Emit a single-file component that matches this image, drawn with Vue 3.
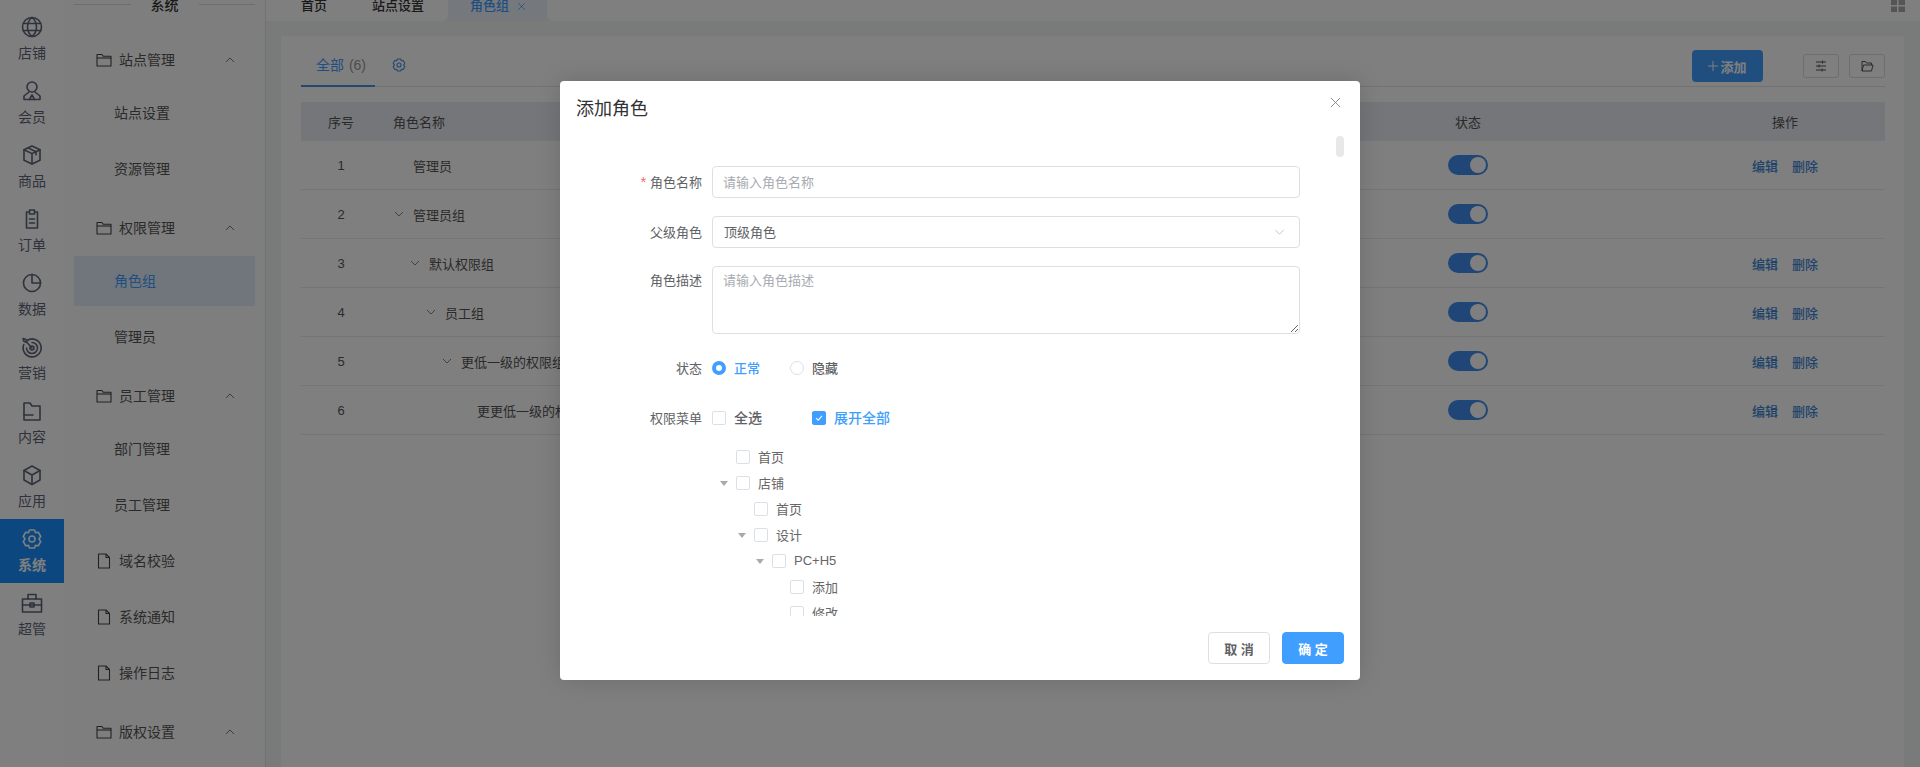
<script setup>
const railItems = [
  { label: '店铺', paths: ['M12 2.500a9.500 9.500 0 1 0 0 19a9.500 9.500 0 1 0 0-19z', 'M12 2.500c-6 5-6 14 0 19M12 2.500c6 5 6 14 0 19', 'M3.600 8.500h16.800M3.600 15.500h16.800'] },
  { label: '会员', paths: ['M12 3a5 5 0 1 0 0 10a5 5 0 1 0 0-10z', 'M9 13l-5 4v3.500h16V17l-5-4', 'M9.500 20.500L12 16l2.500 4.500'] },
  { label: '商品', paths: ['M12 3l8 3.800v10.400l-8 3.800l-8-3.800V6.800z', 'M4 6.800l8 3.800l8-3.800M12 10.600V21', 'M8 4.900l8 3.800v3'] },
  { label: '订单', paths: ['M8.500 5H6.500v16h11V5h-2', 'M9.500 3h5v4h-5z', 'M9.500 12h5M9.500 16h5'] },
  { label: '数据', paths: ['M12 3.500a8.500 8.500 0 1 0 8.500 8.500', 'M12 3.500V12h8.500', 'M12 3.500a8.500 8.500 0 0 1 8.500 8.500'] },
  { label: '营销', paths: ['M7 5.500a9 9 0 1 1-3.200 4', 'M12 7.500a5.500 5.500 0 1 1-5.500 5.500', 'M12 11a2 2 0 1 0 0 4a2 2 0 1 0 0-4z', 'M3 3.500l3 1l1 3l5 5.500M3 3.500l1 3l3 1'] },
  { label: '内容', paths: ['M4 4h6l2 3h8v14H4z', 'M4 16h9'] },
  { label: '应用', paths: ['M12 3l8 4.500v9.500l-8 4.500l-8-4.500V7.500z', 'M4 7.500l8 4.500l8-4.500M12 12v9.500'] },
  { label: '系统', active: true, paths: ['M9.500 3h5l1 2.600l2.800-.4l2.400 4.300l-1.800 2.500l1.800 2.500l-2.400 4.300l-2.800-.4l-1 2.600h-5l-1-2.600l-2.800.4l-2.400-4.300l1.800-2.500l-1.800-2.500l2.400-4.300l2.800.4z', 'M12 9a3 3 0 1 0 0 6a3 3 0 1 0 0-6z'] },
  { label: '超管', paths: ['M2.500 8h19v13h-19z', 'M8 8V3.500h8V8', 'M2.500 14h19', 'M10 12h4v4h-4z'] },
]

const menu = [
  { type: 'group', label: '站点管理' },
  { type: 'sub', label: '站点设置' },
  { type: 'sub', label: '资源管理' },
  { type: 'group', label: '权限管理' },
  { type: 'sub', label: '角色组', active: true },
  { type: 'sub', label: '管理员' },
  { type: 'group', label: '员工管理' },
  { type: 'sub', label: '部门管理' },
  { type: 'sub', label: '员工管理' },
  { type: 'leaf', label: '域名校验' },
  { type: 'leaf', label: '系统通知' },
  { type: 'leaf', label: '操作日志' },
  { type: 'group', label: '版权设置' },
]

const rows = [
  { no: 1, name: '管理员', level: 0, arrow: false, ops: true },
  { no: 2, name: '管理员组', level: 0, arrow: true, ops: false },
  { no: 3, name: '默认权限组', level: 1, arrow: true, ops: true },
  { no: 4, name: '员工组', level: 2, arrow: true, ops: true },
  { no: 5, name: '更低一级的权限组', level: 3, arrow: true, ops: true },
  { no: 6, name: '更更低一级的权限组', level: 4, arrow: false, ops: true },
]

const tree = [
  { label: '首页', level: 0, arrow: false },
  { label: '店铺', level: 0, arrow: true },
  { label: '首页', level: 1, arrow: false },
  { label: '设计', level: 1, arrow: true },
  { label: 'PC+H5', level: 2, arrow: true },
  { label: '添加', level: 3, arrow: false },
  { label: '修改', level: 3, arrow: false },
  { label: '删除', level: 3, arrow: false },
]
</script>

<template>
  <div class="page">
    <aside class="rail">
      <div v-for="item in railItems" :key="item.label" class="rail-item" :class="{ active: item.active }">
        <svg class="rail-icon" viewBox="0 0 24 24" fill="none" stroke="currentColor" stroke-width="1.600" stroke-linejoin="round" stroke-linecap="round">
          <path v-for="d in item.paths" :key="d" :d="d" />
        </svg>
        <span>{{ item.label }}</span>
      </div>
    </aside>

    <nav class="menu">
      <div class="menu-head"><i></i><b>系统</b><i></i></div>
      <template v-for="(m, idx) in menu" :key="idx">
        <div v-if="m.type === 'group'" class="menu-group">
          <svg class="m-icon" viewBox="0 0 16 16" fill="none" stroke="currentColor" stroke-width="1.100" stroke-linejoin="round">
            <path d="M1 2.500h5l1.200 1.800H15V14H1z" /><path d="M1 6h14" />
          </svg>
          <span class="m-text">{{ m.label }}</span>
          <svg class="chev" viewBox="0 0 10 6" fill="none" stroke="currentColor" stroke-width="0.900"><path d="M1 5l4-4l4 4" /></svg>
        </div>
        <div v-else-if="m.type === 'sub'" class="menu-sub" :class="{ active: m.active }">{{ m.label }}</div>
        <div v-else class="menu-leaf">
          <svg class="m-icon" viewBox="0 0 16 16" fill="none" stroke="currentColor" stroke-width="1.100" stroke-linejoin="round">
            <path d="M2.500 1h7.500l3.500 3.500V15h-11z" /><path d="M10 1v3.500h3.500" />
          </svg>
          <span class="m-text">{{ m.label }}</span>
        </div>
      </template>
    </nav>

    <main class="main">
      <header class="tabs">
        <div class="tab">首页</div>
        <div class="tab">站点设置</div>
        <div class="tab current">角色组
          <svg class="tab-x" viewBox="0 0 10 10" fill="none" stroke="currentColor" stroke-width="0.900"><path d="M1.500 1.500l7 7M8.500 1.500l-7 7" /></svg>
        </div>
        <svg class="grid-icon" viewBox="0 0 14 12" fill="currentColor">
          <rect x="0" y="0" width="6" height="5" /><rect x="7.500" y="0" width="6.500" height="5" />
          <rect x="0" y="6.500" width="6" height="5.500" /><rect x="7.500" y="6.500" width="6.500" height="5.500" />
        </svg>
      </header>

      <section class="content">
        <div class="card">
          <div class="card-bar">
            <div class="all-tab">全部 <em>(6)</em></div>
            <svg class="bar-gear" viewBox="0 0 24 24" fill="none" stroke="currentColor" stroke-width="1.700" stroke-linejoin="round">
              <path d="M9.500 3h5l1 2.600l2.800-.4l2.400 4.300l-1.800 2.500l1.800 2.500l-2.400 4.300l-2.800-.4l-1 2.600h-5l-1-2.600l-2.800.4l-2.400-4.300l1.800-2.500l-1.800-2.500l2.400-4.300l2.800.4z" />
              <path d="M12 9a3 3 0 1 0 0 6a3 3 0 1 0 0-6z" />
            </svg>
            <div class="bar-fill"></div>
            <button class="add-btn">
              <svg viewBox="0 0 10 10" fill="none" stroke="currentColor" stroke-width="1"><path d="M5 0v10M0 5h10" /></svg>添加
            </button>
            <button class="ghost-btn">
              <svg viewBox="0 0 14 14" fill="none" stroke="currentColor" stroke-width="1"><path d="M2 3h10M2 7h10M2 11h10M8.500 1.500v3M5 5.500v3M8 9.500v3" /></svg>
            </button>
            <button class="ghost-btn">
              <svg viewBox="0 0 14 14" fill="none" stroke="currentColor" stroke-width="1" stroke-linejoin="round"><path d="M2 12V2.500h3.500l1 1.500h5v2M2 12l1.500-6H13l-1.500 6z" /></svg>
            </button>
          </div>

          <div class="t-row t-head">
            <div class="c-no">序号</div>
            <div class="c-name head-name">角色名称</div>
            <div class="c-center">状态</div>
            <div class="c-center">操作</div>
          </div>
          <div v-for="r in rows" :key="r.no" class="t-row">
            <div class="c-no num">{{ r.no }}</div>
            <div class="c-name" :style="{ paddingLeft: 12 + r.level * 16 + 'px' }">
              <span class="arrow-slot">
                <svg v-if="r.arrow" viewBox="0 0 10 6" fill="none" stroke="currentColor" stroke-width="0.900"><path d="M1 1l4 4l4-4" /></svg>
              </span>
              <span class="nm">{{ r.name }}</span>
            </div>
            <div class="c-center"><span class="toggle"><i></i></span></div>
            <div class="c-center ops">
              <template v-if="r.ops"><a>编辑</a><a>删除</a></template>
            </div>
          </div>
        </div>
      </section>
    </main>

    <div class="overlay"></div>

    <div class="dialog">
      <div class="d-head">
        <span class="d-title">添加角色</span>
        <svg class="d-close" viewBox="0 0 12 12" fill="none" stroke="currentColor" stroke-width="1"><path d="M1 1l10 10M11 1L1 11" /></svg>
      </div>
      <div class="d-body">
        <div class="thumb"></div>
        <div class="f-row">
          <label><span class="req">*</span> 角色名称</label>
          <input class="ctl" type="text" placeholder="请输入角色名称" />
        </div>
        <div class="f-row">
          <label>父级角色</label>
          <div class="ctl select">
            <span>顶级角色</span>
            <svg viewBox="0 0 12 7" fill="none" stroke="currentColor" stroke-width="0.900"><path d="M1 1l5 5l5-5" /></svg>
          </div>
        </div>
        <div class="f-row top">
          <label>角色描述</label>
          <textarea class="ctl area" placeholder="请输入角色描述"></textarea>
        </div>
        <div class="f-row">
          <label>状态</label>
          <div class="opts">
            <span class="radio on"></span><span class="opt blue">正常</span>
            <span class="radio second"></span><span class="opt">隐藏</span>
          </div>
        </div>
        <div class="f-row">
          <label>权限菜单</label>
          <div class="opts big">
            <span class="check"></span><span class="opt all">全选</span>
            <span class="check on">
              <svg viewBox="0 0 14 14" fill="none" stroke="#fff" stroke-width="1.200"><path d="M3.500 7l2.500 2.500l4.500-5" /></svg>
            </span><span class="opt blue">展开全部</span>
          </div>
        </div>
        <div class="tree">
          <div v-for="(n, i) in tree" :key="i" class="t-node" :style="{ paddingLeft: n.level * 18 + 'px' }">
            <span class="caret-slot"><i v-if="n.arrow" class="caret"></i></span>
            <span class="check"></span>
            <span class="t-label">{{ n.label }}</span>
          </div>
        </div>
      </div>
      <div class="d-foot">
        <button class="btn">取 消</button>
        <button class="btn primary">确 定</button>
      </div>
    </div>
  </div>
</template>

<style>
html, body { margin: 0; overflow: hidden; }
</style>

<style scoped>
.page {
  display: flex;
  width: 1920px;
  height: 767px;
  overflow: hidden;
  position: relative;
  background: #fff;
  font-family: "Liberation Sans", "Noto Sans CJK SC", sans-serif;
  font-size: 13px;
  color: #606266;
}
.rail {
  width: 64px;
  flex: none;
  padding-top: 7px;
  box-sizing: border-box;
  background: #fff;
}
.rail-item {
  height: 64px;
  display: flex;
  flex-direction: column;
  align-items: center;
  padding-top: 8px;
  box-sizing: border-box;
  font-size: 14px;
  line-height: 20px;
  color: #5f6478;
}
.rail-item span { margin-top: 4px; }
.rail-item.active { background: #1890ff; color: #fff; font-weight: 700; }
.rail-icon { width: 24px; height: 24px; display: block; }

.menu {
  width: 202px;
  flex: none;
  box-sizing: border-box;
  padding: 0 10px;
  border-right: 1px solid #e4e4e4;
  background: #fdfdfd;
  font-size: 14px;
  color: #555;
}
.menu-head {
  display: flex;
  align-items: center;
  height: 20px;
  margin-top: -6px;
  margin-bottom: 18px;
  color: #333;
  font-weight: 500;
}
.menu-head i { flex: 1; height: 1px; background: #dcdcdc; }
.menu-head b { width: 68px; text-align: center; font-weight: 500; }
.menu-group, .menu-leaf {
  display: flex;
  align-items: center;
  padding-left: 22px;
  color: #555;
}
.menu-group { height: 56px; }
.menu-leaf { height: 50px; margin-bottom: 6px; }
.m-text { padding-bottom: 2px; }
.m-icon { width: 16px; height: 16px; margin-right: 7px; flex: none; color: #444; }
.chev { width: 10px; height: 6px; margin-left: 50px; color: #666; }
.menu-sub {
  height: 50px;
  line-height: 50px;
  margin-bottom: 6px;
  padding-left: 40px;
}
.menu-sub.active { background: #e3edfb; color: #409eff; }

.main { flex: 1; min-width: 0; display: flex; flex-direction: column; }
.tabs {
  height: 21px;
  flex: none;
  display: flex;
  position: relative;
  padding-left: 35px;
  box-sizing: border-box;
  font-size: 13px;
  line-height: 12px;
  color: #333;
  font-weight: 500;
  background: #fff;
}
.tab { margin-right: 45px; }
.tab.current {
  width: 99px;
  height: 21px;
  box-sizing: border-box;
  margin-left: -21px;
  padding-left: 22px;
  background: #eaf0fa;
  color: #409eff;
  display: flex;
  align-items: flex-start;
  position: relative;
}
.tab.current::before,
.tab.current::after {
  content: "";
  position: absolute;
  bottom: 0;
  width: 7px;
  height: 7px;
}
.tab.current::before {
  left: -7px;
  background: radial-gradient(circle at 0 0, transparent 7px, #eaf0fa 7.500px);
}
.tab.current::after {
  right: -7px;
  background: radial-gradient(circle at 100% 0, transparent 7px, #eaf0fa 7.500px);
}
.tab-x { width: 9px; height: 9px; margin: 2px 0 0 8px; color: #409eff; }
.grid-icon { position: absolute; right: 15px; top: 0; width: 14px; height: 12px; color: #aaa; }

.content { flex: 1; background: #f3f5f5; padding: 15px 16px 0 15px; min-height: 0; }
.card { background: #fff; height: 100%; padding: 0 19px 0 20px; box-sizing: border-box; }
.card-bar {
  height: 50px;
  display: flex;
  align-items: center;
  border-bottom: 1px solid #e4e4e4;
  box-sizing: content-box;
  position: relative;
}
.all-tab {
  position: relative;
  width: 74px;
  height: 50px;
  line-height: 58px;
  box-sizing: border-box;
  padding-left: 15px;
  font-size: 14px;
  color: #409eff;
}
.all-tab em { font-style: normal; color: #999; font-size: 14px; margin-left: 1px; }
.all-tab::after {
  content: "";
  position: absolute;
  left: 0;
  right: 0;
  bottom: -1px;
  height: 2px;
  background: #4a90e2;
}
.bar-gear { width: 16px; height: 16px; margin: 8px 0 0 16px; color: #4a90e2; }
.bar-fill { flex: 1; }
.add-btn {
  width: 71px;
  height: 32px;
  margin-top: 10px;
  border: 0;
  border-radius: 4px;
  background: #409eff;
  color: #fff;
  font: 700 13px "Liberation Sans", "Noto Sans CJK SC", sans-serif;
  padding: 0;
  display: flex;
  align-items: center;
  justify-content: center;
}
.add-btn svg { width: 10px; height: 10px; margin-right: 2px; }
.ghost-btn {
  width: 36px;
  height: 24px;
  margin-top: 10px;
  margin-left: 10px;
  border: 1px solid #dcdcdc;
  border-radius: 3px;
  background: #fff;
  padding: 0;
  color: #555;
  display: flex;
  align-items: center;
  justify-content: center;
}
.add-btn + .ghost-btn { margin-left: 40px; }
.ghost-btn svg { width: 14px; height: 14px; }

.t-row {
  display: grid;
  grid-template-columns: 80px 1fr 434px 200px;
  height: 49px;
  align-items: center;
  border-bottom: 1px solid #e8eaee;
  box-sizing: border-box;
  font-size: 13px;
  color: #555;
}
.t-head {
  height: 39px;
  margin-top: 15px;
  background: #e9edf3;
  border-bottom: 0;
  color: #555;
}
.c-no, .c-center { text-align: center; }
.num { font-size: 13px; }
.c-name { display: flex; align-items: center; }
.head-name { padding-left: 12px; }
.arrow-slot { width: 20px; display: inline-flex; align-items: center; flex: none; padding-left: 1px; box-sizing: border-box; color: #777; }
.arrow-slot svg { width: 10px; height: 6px; }
.nm { white-space: nowrap; }
.toggle {
  display: inline-block;
  width: 40px;
  height: 20px;
  border-radius: 10px;
  background: #3f8cec;
  position: relative;
  vertical-align: middle;
}
.toggle i {
  position: absolute;
  right: 2px;
  top: 2px;
  width: 16px;
  height: 16px;
  border-radius: 50%;
  background: #fff;
}
.ops a { color: #3d86d6; font-weight: 500; }
.ops a + a { margin-left: 14px; }

.overlay { position: absolute; inset: 0; background: rgba(0, 0, 0, 0.5); }

.dialog {
  position: absolute;
  left: 560px;
  top: 81px;
  width: 800px;
  height: 599px;
  background: #fff;
  border-radius: 4px;
  box-shadow: 0 0 24px rgba(0, 0, 0, 0.15);
  display: flex;
  flex-direction: column;
  color: #606266;
}
.d-head {
  height: 55px;
  flex: none;
  display: flex;
  align-items: flex-start;
  justify-content: space-between;
  padding: 15px 19px 0 16px;
  box-sizing: border-box;
}
.d-title { font-size: 18px; line-height: 26px; color: #303133; }
.d-close { width: 11px; height: 11px; margin-top: 1px; color: #808388; }
.d-body {
  height: 480px;
  flex: none;
  overflow: hidden;
  position: relative;
  padding-top: 30px;
  box-sizing: border-box;
}
.thumb {
  position: absolute;
  right: 16px;
  top: 0;
  width: 8px;
  height: 21px;
  border-radius: 4px;
  background: #e8e8e8;
}
.f-row {
  display: flex;
  align-items: center;
  margin-bottom: 18px;
  min-height: 32px;
}
.f-row.top { align-items: flex-start; }
.f-row.top label { line-height: 32px; padding-bottom: 0; margin-top: -1px; }
.f-row label {
  width: 142px;
  margin-right: 10px;
  padding-bottom: 2px;
  flex: none;
  text-align: right;
  color: #606266;
  font-size: 13px;
}
.req { color: #f56c6c; font-size: 15px; }
.ctl {
  width: 588px;
  height: 32px;
  box-sizing: border-box;
  border: 1px solid #dcdfe6;
  border-radius: 4px;
  padding: 0 10px;
  font: 13px "Liberation Sans", "Noto Sans CJK SC", sans-serif;
  color: #606266;
  outline: none;
  background: #fff;
}
.ctl::placeholder { color: #a8abb2; opacity: 1; }
.select {
  display: flex;
  align-items: center;
  justify-content: space-between;
  padding: 0 14px 2px 11px;
}
.select svg { width: 11px; height: 6px; color: #b0b4bc; margin-top: 2px; }
.area { height: 68px; padding: 4px 10px; line-height: 19px; display: block; resize: vertical; }
.opts { display: flex; align-items: center; font-size: 13px; }
.opts.big { font-size: 14px; }
.radio {
  width: 14px;
  height: 14px;
  flex: none;
  box-sizing: border-box;
  border: 1px solid #dcdfe6;
  border-radius: 50%;
  background: #fff;
}
.radio.on { border: 4px solid #409eff; }
.radio.second { margin-left: 30px; }
.opt { margin-left: 8px; font-weight: 500; color: #606266; padding-bottom: 2px; }
.opt.blue { color: #409eff; }
.opt.all { margin-right: 50px; }
.check {
  width: 14px;
  height: 14px;
  flex: none;
  box-sizing: border-box;
  border: 1px solid #dcdfe6;
  border-radius: 2px;
  background: #fff;
  display: block;
}
.check.on { background: #409eff; border-color: #409eff; }
.check svg { width: 12px; height: 12px; display: block; }
.tree { margin-top: -8px; padding-left: 152px; }
.t-node { display: flex; align-items: center; height: 26px; }
.caret-slot { width: 24px; flex: none; display: flex; justify-content: center; }
.caret {
  display: block;
  width: 0;
  height: 0;
  border-left: 4px solid transparent;
  border-right: 4px solid transparent;
  border-top: 5px solid #aaa;
}
.t-label { margin-left: 8px; font-size: 13px; color: #666; padding-bottom: 2px; }

.d-foot {
  flex: 1;
  display: flex;
  justify-content: flex-end;
  gap: 12px;
  padding: 16px 16px 0 0;
  box-sizing: border-box;
}
.btn {
  width: 62px;
  height: 32px;
  border: 1px solid #dcdfe6;
  border-radius: 4px;
  background: #fff;
  color: #606266;
  padding: 0;
  font: 700 13px "Liberation Sans", "Noto Sans CJK SC", sans-serif;
}
.btn.primary { background: #409eff; border-color: #409eff; color: #fff; }
</style>
